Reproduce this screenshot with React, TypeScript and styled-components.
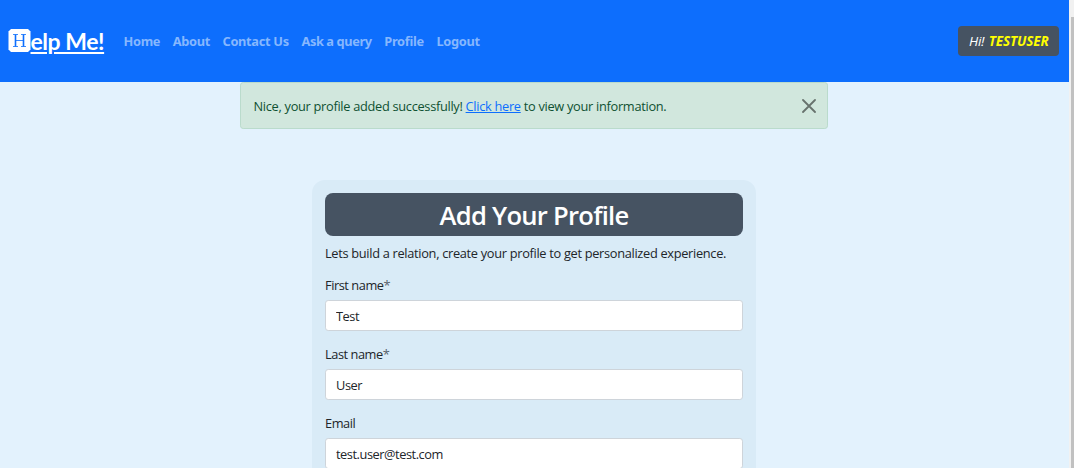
import React from "react";
import styled, { createGlobalStyle } from "styled-components";

const GlobalStyle = createGlobalStyle`
  *, *::before, *::after { box-sizing: border-box; }
  html, body { margin: 0; height: 100%; overflow: hidden; }
  body {
    background: #e3f2fd;
    color: #212529;
    font-family: "Open Sans", "Noto Sans", sans-serif;
    font-size: 12.8px;
    line-height: 19.2px;
  }
`;

const Window = styled.div`
  display: flex;
  height: 468px;
  overflow: hidden;
`;

const Page = styled.div`
  flex: 1;
  min-width: 0;
`;

const ScrollTrack = styled.div`
  width: 5px;
  padding: 17px 0 0 2px;
  background: #f1f1f1;
`;

const ScrollThumb = styled.div`
  height: 451px;
  background: #c1c1c1;
`;

const Navbar = styled.nav`
  display: flex;
  align-items: center;
  height: 82px;
  padding: 0 10px 0 8px;
  background: #0d6efd;
`;

const Brand = styled.a`
  display: flex;
  align-items: center;
  width: 96px;
  margin-right: 19.5px;
  color: #fff;
  font: 700 23px/30px Lato, sans-serif;
`;

const BrandMark = styled.svg`
  flex: none;
  width: 22.5px;
  height: 24px;
`;

const BrandText = styled.span`
  letter-spacing: -0.45px;
  white-space: nowrap;
  text-decoration: underline;
  text-decoration-thickness: 2px;
  text-underline-offset: 2px;
  text-decoration-skip-ink: auto;
`;

const NavLinks = styled.div`
  display: flex;
  flex: 1;
  gap: 12.6px;
  padding-top: 1px;
`;

const NavLink = styled.a<{ $spacing: number }>`
  color: #86b7fe;
  font-family: "Noto Sans", sans-serif;
  font-weight: 700;
  letter-spacing: ${(p) => p.$spacing}px;
  white-space: nowrap;
`;

const UserBadge = styled.div`
  display: flex;
  align-items: center;
  padding: 1px 0 0 11px;
  gap: 4.5px;
  width: 101px;
  height: 30px;
  border-radius: 4px;
  background: #465362;
  color: #fff;
  font-size: 13.5px;
  font-style: italic;
  letter-spacing: -0.3px;
`;

const UserName = styled.strong`
  color: #ff0;
  letter-spacing: -0.1px;
`;

const Alert = styled.div`
  display: flex;
  align-items: center;
  justify-content: space-between;
  width: 588px;
  height: 47px;
  margin-left: 240px;
  padding: 2px 11.5px 0 12.5px;
  border: 1px solid #badbcc;
  border-radius: 3.2px;
  background: #d1e7dd;
  color: #0f5132;
  letter-spacing: -0.3px;
`;

const AlertLink = styled.a`
  color: #0d6efd;
  text-decoration: underline;
`;

const CloseIcon = styled.svg`
  width: 14px;
  height: 14px;
  margin-top: -2px;
  opacity: 0.5;
`;

const Card = styled.form`
  width: 444px;
  height: 400px;
  margin: 51px 0 0 312px;
  padding: 13px;
  border-radius: 13px;
  background: #d9ebf7;
`;

const Title = styled.h1`
  height: 43px;
  margin: 0 0 8px;
  border-radius: 8px;
  background: #465362;
  color: #fff;
  font-size: 25.6px;
  font-weight: 600;
  line-height: 45px;
  letter-spacing: -0.75px;
  text-align: center;
`;

const Intro = styled.p`
  margin: 0 0 13px;
  letter-spacing: -0.31px;
  white-space: nowrap;
`;

const Field = styled.label`
  display: block;
  height: 69px;
  letter-spacing: -0.45px;
`;

const Label = styled.span`
  display: block;
  height: 24px;
`;

const Required = styled.span`
  color: #59636c;
`;

const Input = styled.input`
  display: block;
  width: 100%;
  height: 31px;
  padding: 0 10px;
  border: 1px solid #ced4da;
  border-radius: 3.2px;
  background: #fff;
  color: #212529;
  font: inherit;
  letter-spacing: -0.45px;
`;

const links = [
  { text: "Home", spacing: -0.3 },
  { text: "About", spacing: -0.35 },
  { text: "Contact Us", spacing: -0.3 },
  { text: "Ask a query", spacing: -0.4 },
  { text: "Profile", spacing: -0.3 },
  { text: "Logout", spacing: -0.3 },
];

const fields = [
  { label: "First name", required: true, value: "Test" },
  { label: "Last name", required: true, value: "User" },
  { label: "Email", required: false, value: "test.user@test.com" },
];

export default function App() {
  return (
    <>
      <GlobalStyle />
      <Window>
        <Page>
          <Navbar>
            <Brand>
              <BrandMark viewBox="0 0 22.5 24">
                <path d="M3 0H20L22.500 2.500V20.500L20 23H3L.5 20.500V2.500Z" fill="#fff" />
                <path
                  d="M5 5.500H10M13 5.500H18M5 17.500H10M13 17.500H18M8 11.500H15"
                  fill="none"
                  stroke="#0d6efd"
                  strokeWidth=".8"
                />
                <path d="M7.500 5.500V17.500M15.500 5.500V17.500" stroke="#0d6efd" strokeWidth="1.600" />
              </BrandMark>
              <BrandText>elp Me!</BrandText>
            </Brand>
            <NavLinks>
              {links.map((l) => (
                <NavLink key={l.text} $spacing={l.spacing}>{l.text}</NavLink>
              ))}
            </NavLinks>
            <UserBadge>
              <span>Hi!</span>
              <UserName>TESTUSER</UserName>
            </UserBadge>
          </Navbar>
          <Alert>
            <span>
              Nice, your profile added successfully! <AlertLink>Click here</AlertLink> to view your information.
            </span>
            <CloseIcon viewBox="0 0 14 14">
              <path d="M1 1L13 13M13 1L1 13" stroke="#000" strokeWidth="1.800" strokeLinecap="round" />
            </CloseIcon>
          </Alert>
          <Card>
            <Title>Add Your Profile</Title>
            <Intro>Lets build a relation, create your profile to get personalized experience.</Intro>
            {fields.map((f) => (
              <Field key={f.label}>
                <Label>
                  {f.label}
                  {f.required && <Required>*</Required>}
                </Label>
                <Input defaultValue={f.value} />
              </Field>
            ))}
          </Card>
        </Page>
        <ScrollTrack>
          <ScrollThumb />
        </ScrollTrack>
      </Window>
    </>
  );
}
